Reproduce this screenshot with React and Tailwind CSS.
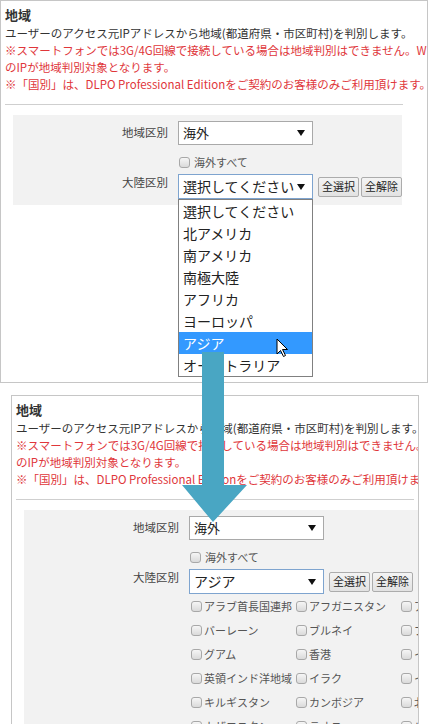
const continents = ["選択してください", "北アメリカ", "南アメリカ", "南極大陸", "アフリカ", "ヨーロッパ", "アジア", "オーストラリア"];

const asia = [
  ["アラブ首長国連邦", "アフガニスタン", "アルメニア"],
  ["バーレーン", "ブルネイ", "ブータン"],
  ["グアム", "香港", "インドネシア"],
  ["英領インド洋地域", "イラク", "イラン"],
  ["キルギスタン", "カンボジア", "北朝鮮"],
  ["カザフスタン", "ラオス", "レバノン"],
];

// small rounded checkbox like the classic Windows one
const Check = () => (
  <span className="inline-block shrink-0 w-[11px] h-[11px] rounded-[3px] border border-[#a8a8a8] bg-linear-to-b from-[#f6f6f6] to-[#dadada]" />
);

const Caret = () => (
  <svg width="8" height="6" viewBox="0 0 8 6" className="shrink-0">
    <polygon points="0,0 8,0 4,6" fill="#111" />
  </svg>
);

const Select = ({ value, big, focused, children }) => (
  <div className="relative">
    <div
      className={`flex items-center justify-between w-[135px] bg-white border pl-[4px] pr-[7px] ${
        big ? "h-[25px]" : "h-[24px]"
      } ${focused ? "border-[#7ea4cf]" : "border-[#a9a9a9]"}`}
    >
      <span className={`text-[#222] whitespace-nowrap ${big ? "text-[14px]" : "text-[13px]"}`}>{value}</span>
      <Caret />
    </div>
    {children}
  </div>
);

const SmallButton = ({ label }) => (
  <button className="h-[20px] px-[3px] border border-[#acacac] rounded-[2px] bg-linear-to-b from-[#f4f4f4] to-[#e2e2e2] text-[11px] text-[#222] leading-none">
    {label}
  </button>
);

const RegionPanel = ({ className, continent, open, boxClass, children }) => (
  <div className={`border border-[#c6c6c6] overflow-hidden pl-[4px] pt-[5px] ${className}`}>
    <div className="w-[398px]">
      <h2 className="text-[13px] font-bold text-[#333] leading-[17px] mb-[2px]">地域</h2>
      <p className="text-[11.5px] leading-[17px] text-[#333] whitespace-nowrap">
        ユーザーのアクセス元IPアドレスから地域(都道府県・市区町村)を判別します。
      </p>
      <p className="text-[11.5px] leading-[17px] text-[#e0363a] whitespace-nowrap">
        ※スマートフォンでは3G/4G回線で接続している場合は地域判別はできません。Wi-Fi接続の場合はWi-Fi
      </p>
      <p className="text-[11.5px] leading-[17px] text-[#e0363a] whitespace-nowrap">のIPが地域判別対象となります。</p>
      <p className="text-[11.5px] leading-[17px] text-[#e0363a] whitespace-nowrap">
        ※「国別」は、DLPO Professional Editionをご契約のお客様のみご利用頂けます。
      </p>
      <hr className="mt-[11px] border-t border-[#cfcfcf]" />
    </div>

    <div className={`mt-[10px] ml-[8px] bg-[#f2f2f2] pt-[6px] pb-[6px] ${boxClass}`}>
      <div className="flex items-center">
        <div className="w-[155px] text-right text-[11.5px] text-[#444]">地域区別</div>
        <div className="ml-[10px]">
          <Select value="海外" />
        </div>
      </div>

      <div className="flex items-center h-[29px] pt-[5px] pl-[166px] gap-[4px]">
        <Check />
        <span className="text-[11px] text-[#555]">海外すべて</span>
      </div>

      <div className="flex items-start">
        <div className="w-[155px] text-right text-[11.5px] leading-[17px] text-[#444]">大陸区別</div>
        <div className="ml-[10px] flex items-center">
          <Select value={continent} big focused>
            {open && (
              <ul className="absolute top-[25px] left-0 w-[135px] bg-white border border-[#808080] z-10">
                {continents.map((c) => (
                  <li
                    key={c}
                    className={`h-[22px] px-[4px] text-[14px] leading-[22px] whitespace-nowrap ${
                      c === "アジア" ? "bg-[#3399ff] text-white" : "text-[#222]"
                    }`}
                  >
                    {c}
                  </li>
                ))}
              </ul>
            )}
          </Select>
          <div className="ml-[5px] flex gap-[2px]">
            <SmallButton label="全選択" />
            <SmallButton label="全解除" />
          </div>
        </div>
      </div>

      {children}
    </div>
  </div>
);

const App = () => {
  return (
    <div className="relative w-[430px] h-[724px] overflow-hidden bg-white font-['Noto_Sans_CJK_JP',sans-serif] flex flex-col">
      {/* before: continent dropdown open */}
      <RegionPanel className="w-[428px] h-[383px] shrink-0" continent="選択してください" open boxClass="w-[389px]" />

      {/* after: Asia selected, country list shown */}
      <RegionPanel
        className="mt-[12px] ml-[11px] w-[408px] flex-1 border-b-0"
        continent="アジア"
        boxClass="w-max min-w-[389px]"
      >
        <div className="pl-[167px]">
          {asia.map((row, i) => (
            <div key={i} className="flex h-[24px] items-center">
              {row.map((name) => (
                <label key={name} className="w-[105px] flex items-center gap-[2px] shrink-0">
                  <Check />
                  <span className="text-[11px] text-[#555] whitespace-nowrap">{name}</span>
                </label>
              ))}
            </div>
          ))}
        </div>
      </RegionPanel>

      {/* mouse pointer over the highlighted option */}
      <svg className="absolute left-[276px] top-[338px] z-20" width="13" height="20" viewBox="0 0 13 20">
        <polygon points="1,1 1,16 4.5,12.5 7.5,18.5 9.5,17.5 6.5,11.5 11.5,11.5" fill="#fff" stroke="#000" strokeWidth="1" strokeLinejoin="round" />
      </svg>

      {/* transition arrow between the two states */}
      <svg className="absolute left-0 top-0 z-20 pointer-events-none" width="430" height="724" viewBox="0 0 430 724">
        <polygon points="202,352 224,352 224,485 247,485 213,522 182,485 202,485" fill="#49a6c3" />
      </svg>
    </div>
  );
};

export default App;
